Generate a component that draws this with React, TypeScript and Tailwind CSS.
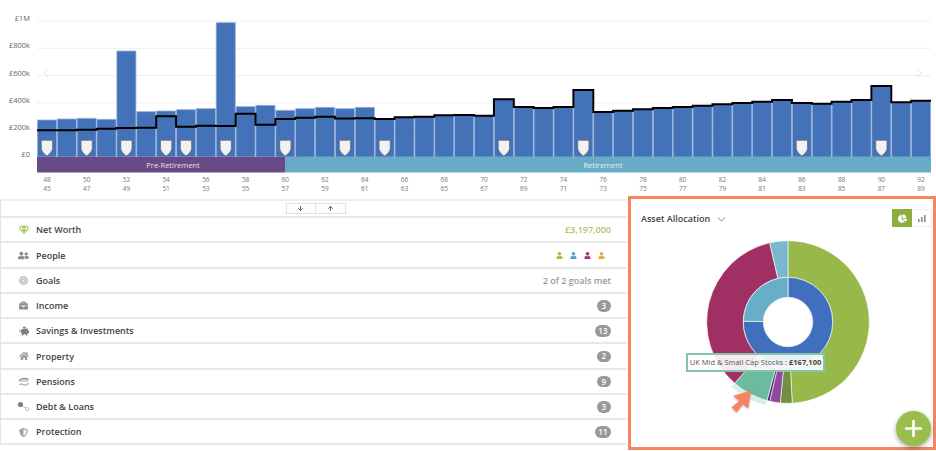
import * as React from "react";
import { ArrowDown, ArrowUp, ChevronDown, ChevronLeft, ChevronRight, Plus } from "lucide-react";
import {
  FaBriefcase,
  FaBullseye,
  FaChartPie,
  FaGem,
  FaHome,
  FaPiggyBank,
  FaShieldAlt,
  FaUser,
  FaUserFriends,
} from "react-icons/fa";

const CHART_LEFT = 37;
const SLOT = 19.867;
const BASE_Y = 157;

// y of the top of each bar and of the black line, read off the picture
const barTops = [
  120, 119, 118.3, 119.3, 51, 111.7, 111, 109.7, 108.7, 22.7, 106.7, 105.3, 110.3, 108.7, 107.3, 108.7, 107.3, 119,
  117.3, 116.7, 115.3, 115, 115.7, 99.3, 107, 108, 107, 90, 112, 110.7, 109.3, 108, 107, 105.7, 104.3, 103, 101.7,
  100, 103, 103.7, 101.7, 100, 86, 102.3, 100.7,
];
const lineTops = [
  130.3, 130.3, 129.7, 128.7, 128, 127.7, 116.3, 126.7, 125.7, 126, 113.7, 124.7, 119, 117.7, 116.7, 118.5, 118.3,
  119, 117.3, 116.7, 115.3, 115, 115.7, 99.3, 107, 108, 107, 90, 112, 110.7, 109.3, 108, 107, 105.7, 104.3, 103,
  101.7, 100, 103, 103.7, 101.7, 100, 86, 102.3, 100.7,
];
const shieldSlots = [0, 2, 4, 6, 7, 9, 12, 15, 17, 23, 27, 38, 42];
const yLabels = [
  { label: "£1M", y: 21 },
  { label: "£800k", y: 48.3 },
  { label: "£600k", y: 75.6 },
  { label: "£400k", y: 103 },
  { label: "£200k", y: 130 },
];

function Chart() {
  let line = "";
  lineTops.forEach((y, i) => {
    const x = CHART_LEFT + i * SLOT;
    line += `${i === 0 ? "M" : "L"}${x} ${y} L${x + SLOT} ${y} `;
  });

  return (
    <svg width="936" height="196" viewBox="0 0 936 196" className="block">
      {yLabels.map((t) => (
        <g key={t.label}>
          <line x1={CHART_LEFT} x2={931} y1={t.y} y2={t.y} stroke="#efefef" strokeWidth="1" />
          <text x={30} y={t.y} textAnchor="end" fontSize="7.5" fill="#666">
            {t.label}
          </text>
        </g>
      ))}
      <text x={30} y={157} textAnchor="end" fontSize="7.5" fill="#666">
        £0
      </text>

      {barTops.map((y, i) => (
        <rect
          key={i}
          x={CHART_LEFT + i * SLOT + 0.4}
          y={y}
          width={SLOT - 0.8}
          height={BASE_Y - y}
          fill="#4472b8"
          stroke="#94aedb"
          strokeWidth="0.8"
        />
      ))}
      <path d={line} fill="none" stroke="#000" strokeWidth="2" />

      {shieldSlots.map((s) => {
        const cx = CHART_LEFT + (s + 0.5) * SLOT;
        return (
          <path
            key={s}
            d={`M${cx - 5.6} 140.3 H${cx + 5.6} V148 C${cx + 5.6} 151.5 ${cx + 2.5} 154 ${cx} 156 C${cx - 2.5} 154 ${cx - 5.6} 151.5 ${cx - 5.6} 148 Z`}
            fill="#f1f1f1"
            stroke="#5b5b5b"
            strokeWidth="0.6"
            strokeLinejoin="round"
          />
        );
      })}

      <rect x={37} y={157} width={248} height={15.5} fill="#6a4a85" />
      <rect x={285} y={157} width={646} height={15.5} fill="#67abc5" />
      <text x={173} y={168} textAnchor="middle" fontSize="7.5" fill="#e6dff0">
        Pre-Retirement
      </text>
      <text x={603} y={168} textAnchor="middle" fontSize="7.5" fill="#e3f3f8">
        Retirement
      </text>

      {Array.from({ length: 23 }, (_, k) => {
        const x = CHART_LEFT + (2 * k + 0.5) * SLOT;
        return (
          <g key={k} fontSize="6.5" fill="#777" textAnchor="middle">
            <text x={x} y={181.5}>
              {48 + 2 * k}
            </text>
            <text x={x} y={190.5}>
              {45 + 2 * k}
            </text>
          </g>
        );
      })}
    </svg>
  );
}

function PensionIcon() {
  return (
    <svg width="12" height="10" viewBox="0 0 12 10" fill="none" stroke="#8f8f8f" strokeWidth="1.4">
      <path d="M1 4 C3 1.5 7 1 10.5 2.5" />
      <path d="M1 8 C2.5 6 4.5 7.5 6 8 C8 8.6 9.5 7 11 6.5" strokeWidth="1" />
      <path d="M3 4.5 C5 3.5 8 3.5 10 4.5" strokeWidth="0.8" />
    </svg>
  );
}

function DebtIcon() {
  return (
    <svg width="13" height="11" viewBox="0 0 13 11" fill="none">
      <circle cx="3.5" cy="3.5" r="2.6" fill="#808080" />
      <path d="M6.5 5.5 L8 7" stroke="#aaa" strokeWidth="1" />
      <circle cx="10" cy="8" r="1.6" stroke="#aaa" strokeWidth="0.8" />
    </svg>
  );
}

const people = ["#9bbd4c", "#4fa3c9", "#a8307f", "#e9ad2b"];

const rows: { label: string; icon: React.ReactNode; right?: React.ReactNode; badge?: string }[] = [
  {
    label: "Net Worth",
    icon: <FaGem size={10} color="#a5c95a" />,
    right: <span className="text-[9px] font-semibold text-[#a9c766]">£3,197,000</span>,
  },
  {
    label: "People",
    icon: <FaUserFriends size={11} color="#8c8c8c" />,
    right: (
      <span className="flex gap-[7px] pr-[6px]">
        {people.map((c) => (
          <FaUser key={c} size={7} color={c} />
        ))}
      </span>
    ),
  },
  {
    label: "Goals",
    icon: <FaBullseye size={9} color="#a8a8a8" />,
    right: <span className="text-[9px] font-semibold text-[#9a9a9a]">2 of 2 goals met</span>,
  },
  { label: "Income", icon: <FaBriefcase size={9} color="#8c8c8c" />, badge: "3" },
  { label: "Savings & Investments", icon: <FaPiggyBank size={10} color="#7d7d7d" />, badge: "13" },
  { label: "Property", icon: <FaHome size={10} color="#9a9a9a" />, badge: "2" },
  { label: "Pensions", icon: <PensionIcon />, badge: "9" },
  { label: "Debt & Loans", icon: <DebtIcon />, badge: "3" },
  { label: "Protection", icon: <FaShieldAlt size={9} color="#a0a0a0" />, badge: "11" },
];

function SummaryList() {
  return (
    <div className="mt-[3px] w-[627px] border-t-2 border-l border-t-[#eeeeee] border-l-[#e2e2e2]">
      <div className="flex h-[17px] items-center justify-center border-b-2 border-[#e8e8e8] pl-[3px]">
        <div className="flex h-[11px] w-[60px] border border-[#e0e0e0] text-[#555]">
          <span className="flex flex-1 items-center justify-center border-r border-[#e0e0e0]">
            <ArrowDown size={7} strokeWidth={3} />
          </span>
          <span className="flex flex-1 items-center justify-center">
            <ArrowUp size={7} strokeWidth={3} />
          </span>
        </div>
      </div>
      {rows.map((row) => (
        <div key={row.label} className="flex h-[25.25px] items-center border-b-2 border-[#e8e8e8] pt-[1px] pr-[16px]">
          <span className="flex w-[35px] justify-center pl-[10px]">{row.icon}</span>
          <span className="text-[9px] font-semibold text-[#444]">{row.label}</span>
          <span className="ml-auto flex items-center">
            {row.right}
            {row.badge && (
              <span className="flex h-[11.5px] min-w-[14.5px] items-center justify-center rounded-full bg-[#999] px-[3.5px] text-[8px] font-semibold text-white">
                {row.badge}
              </span>
            )}
          </span>
        </div>
      ))}
    </div>
  );
}

function arc(start: number, end: number, r0: number, r1: number, c = 86) {
  const pt = (a: number, r: number) => {
    const t = (a * Math.PI) / 180;
    return `${c + r * Math.sin(t)} ${c - r * Math.cos(t)}`;
  };
  const large = end - start > 180 ? 1 : 0;
  return `M${pt(start, r1)} A${r1} ${r1} 0 ${large} 1 ${pt(end, r1)} L${pt(end, r0)} A${r0} ${r0} 0 ${large} 0 ${pt(start, r0)} Z`;
}

const outerSlices = [
  { from: 0, to: 177, fill: "#97b94a" },
  { from: 177, to: 185.5, fill: "#6f9140" },
  { from: 185.5, to: 193, fill: "#8f4a9e" },
  { from: 193, to: 195, fill: "#4b2a7b" },
  { from: 195, to: 221, fill: "#6dbb9f" },
  { from: 221, to: 347, fill: "#a02f63" },
  { from: 347, to: 360, fill: "#79b8cf" },
];

const innerSlices = [
  { from: 0, to: 271, fill: "#3f6fbd" },
  { from: 271, to: 360, fill: "#69aec8" },
];

function Donut() {
  return (
    <svg width="172" height="172" viewBox="0 0 172 172" className="mt-[-1px] ml-[70.7px] block">
      <path d={arc(195, 221, 81, 86)} fill="#6dbb9f" opacity="0.25" />
      {outerSlices.map((s) => (
        <path key={s.from} d={arc(s.from, s.to, 44.7, 81.3)} fill={s.fill} stroke="#fff" strokeWidth="0.6" />
      ))}
      {innerSlices.map((s) => (
        <path key={s.from} d={arc(s.from, s.to, 24.7, 44.7)} fill={s.fill} stroke="#e8eef5" strokeWidth="0.8" />
      ))}
    </svg>
  );
}

function AllocationPanel() {
  return (
    <div className="relative h-[254px] w-[308px] border-[3px] border-[#f5845f]">
      <div className="flex h-[38px] items-center justify-between pr-px pl-[10px]">
        <div className="flex items-center gap-[5px] pt-[2px] text-[9px] font-semibold text-[#444]">
          Asset Allocation
          <ChevronDown size={13} color="#666" strokeWidth={1.5} />
        </div>
        <div className="flex h-[18px] w-[40px]">
          <span className="flex w-[20px] items-center justify-center bg-[#8dae3f]">
            <FaChartPie size={9} color="#fff" />
          </span>
          <span className="flex flex-1 items-center justify-center gap-[1px] border-y border-r border-[#eeeeee]">
            <svg width="8" height="7" viewBox="0 0 8 7" fill="#8a8a8a">
              <rect x="0" y="4" width="1.6" height="3" />
              <rect x="3" y="2" width="1.6" height="5" />
              <rect x="6" y="0" width="1.6" height="7" />
            </svg>
          </span>
        </div>
      </div>
      <Donut />

      <div className="absolute top-[154px] left-[55px] flex h-[19px] w-[139px] items-center justify-center border-2 border-[#86c4ae] bg-white/90 text-[7.5px] whitespace-nowrap text-[#555]">
        UK Mid &amp; Small Cap Stocks :&nbsp;<b className="font-bold text-[#444]">£167,100</b>
      </div>

      <svg width="30" height="30" viewBox="0 0 30 30" className="absolute top-[187px] left-[97px] drop-shadow-[0_1px_1px_rgba(0,0,0,0.3)]">
        <path d="M23 4.7 L20.3 22.3 L14.7 18.3 L8.7 26.3 L3.7 21.3 L11.3 15 L5.3 9.7 Z" fill="#f5845f" />
      </svg>

      <div className="absolute top-[211.5px] left-[264.5px] flex h-[35px] w-[35px] items-center justify-center rounded-full bg-[#9bbd4e] shadow-[0_2px_5px_rgba(0,0,0,0.35)]">
        <Plus size={25} color="#fff" strokeWidth={2.6} />
      </div>
    </div>
  );
}

export default function App() {
  return (
    <div className="relative h-[451px] w-[936px] overflow-hidden bg-white font-['Open_Sans',sans-serif]">
      <Chart />
      <ChevronLeft size={16} color="#e4e4e4" strokeWidth={1.5} className="absolute top-[65px] left-[38px]" />
      <ChevronRight size={16} color="#e4e4e4" strokeWidth={1.5} className="absolute top-[65px] left-[911px]" />
      <div className="flex items-start gap-px">
        <SummaryList />
        <AllocationPanel />
      </div>
    </div>
  );
}
